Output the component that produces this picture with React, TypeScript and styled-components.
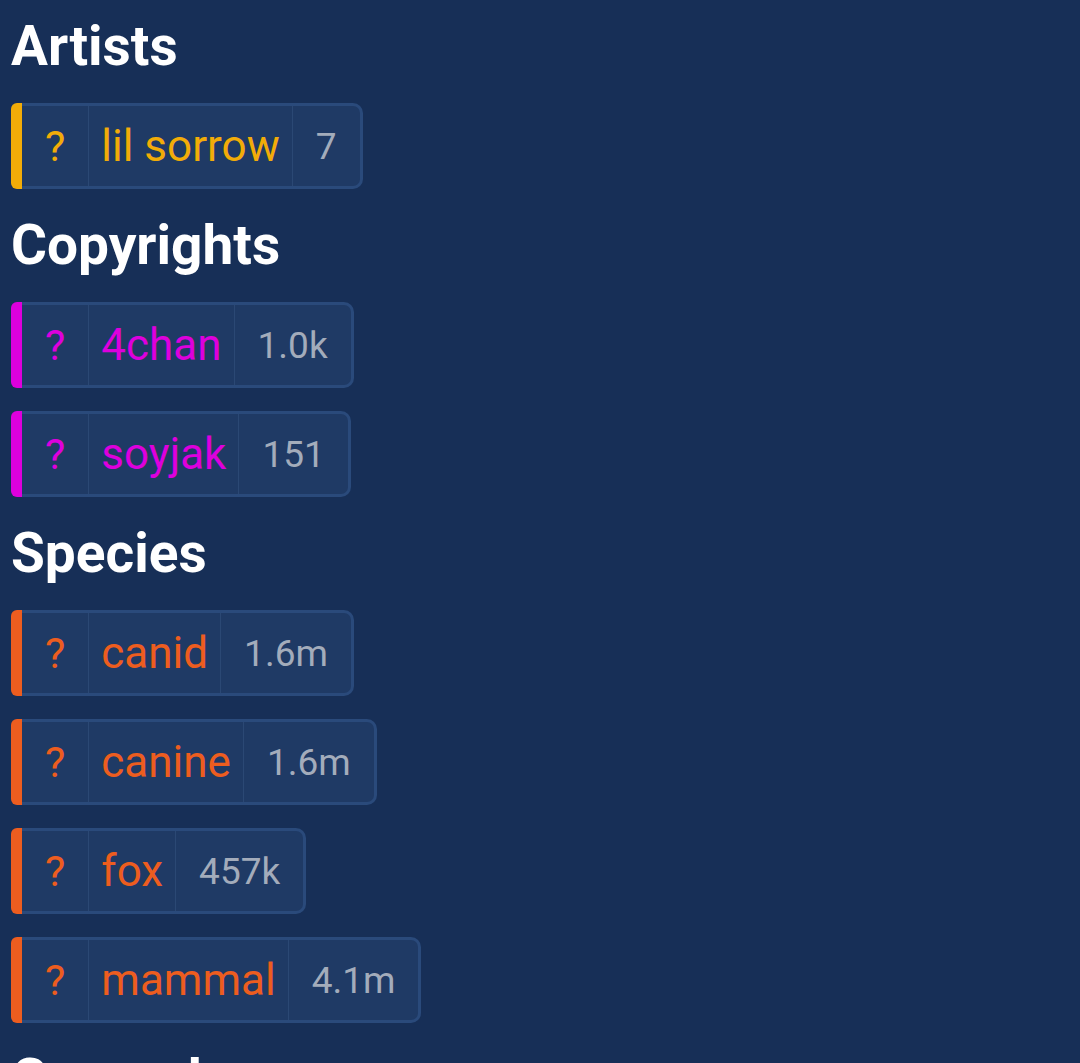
import styled, { createGlobalStyle } from 'styled-components';

const GlobalStyle = createGlobalStyle`
  html, body {
    margin: 0;
    padding: 0;
    background: #172f57;
  }
  body {
    font-family: Roboto, 'Liberation Sans', sans-serif;
  }
`;

const Page = styled.div`
  min-height: 1063px;
  padding: 14px 11px 0;
  box-sizing: border-box;
  background: #172f57;
`;

const Section = styled.section`
  margin-bottom: 24px;
`;

const Heading = styled.h2`
  font-size: 55px;
  line-height: 64px;
  font-weight: 700;
  color: #ffffff;
  margin: 0 0 25px;
`;

const TagList = styled.ul`
  list-style: none;
  margin: 0;
  padding: 0;
  display: flex;
  flex-direction: column;
  align-items: flex-start;
  gap: 23px;
`;

const Tag = styled.li`
  display: inline-flex;
  height: 86px;
`;

const Bar = styled.span<{ $color: string }>`
  width: 11px;
  background: ${(p) => p.$color};
  border-radius: 6px 0 0 6px;
`;

const Body = styled.span`
  display: flex;
  align-items: stretch;
  background: #1f3a65;
  border: 3px solid #2a4a7b;
  border-left: none;
  border-radius: 0 10px 10px 0;
`;

const Cell = styled.span<{ $color?: string; $pad: number; $size: number }>`
  display: flex;
  align-items: center;
  padding: 0 ${(p) => p.$pad}px;
  font-size: ${(p) => p.$size}px;
  color: ${(p) => p.$color ?? '#a3acbb'};
  & + & {
    border-left: 1px solid #2b4874;
  }
`;

type TagData = { name: string; count: string };

const CATEGORIES: { title: string; color: string; tags: TagData[] }[] = [
  { title: 'Artists', color: '#f2ac08', tags: [{ name: 'lil sorrow', count: '7' }] },
  {
    title: 'Copyrights',
    color: '#dd00dd',
    tags: [
      { name: '4chan', count: '1.0k' },
      { name: 'soyjak', count: '151' },
    ],
  },
  {
    title: 'Species',
    color: '#ed5d1f',
    tags: [
      { name: 'canid', count: '1.6m' },
      { name: 'canine', count: '1.6m' },
      { name: 'fox', count: '457k' },
      { name: 'mammal', count: '4.1m' },
    ],
  },
  { title: 'General', color: '#b4c7d9', tags: [] },
];

const App = () => {
  return (
    <Page>
      <GlobalStyle />
      {CATEGORIES.map((cat) => (
        <Section key={cat.title}>
          <Heading>{cat.title}</Heading>
          {cat.tags.length > 0 && (
            <TagList>
              {cat.tags.map((t) => (
                <Tag key={t.name}>
                  <Bar $color={cat.color} />
                  <Body>
                    <Cell $color={cat.color} $pad={23} $size={43}>?</Cell>
                    <Cell $color={cat.color} $pad={12} $size={44}>{t.name}</Cell>
                    <Cell $pad={23} $size={37}>{t.count}</Cell>
                  </Body>
                </Tag>
              ))}
            </TagList>
          )}
        </Section>
      ))}
    </Page>
  );
};

export default App;
